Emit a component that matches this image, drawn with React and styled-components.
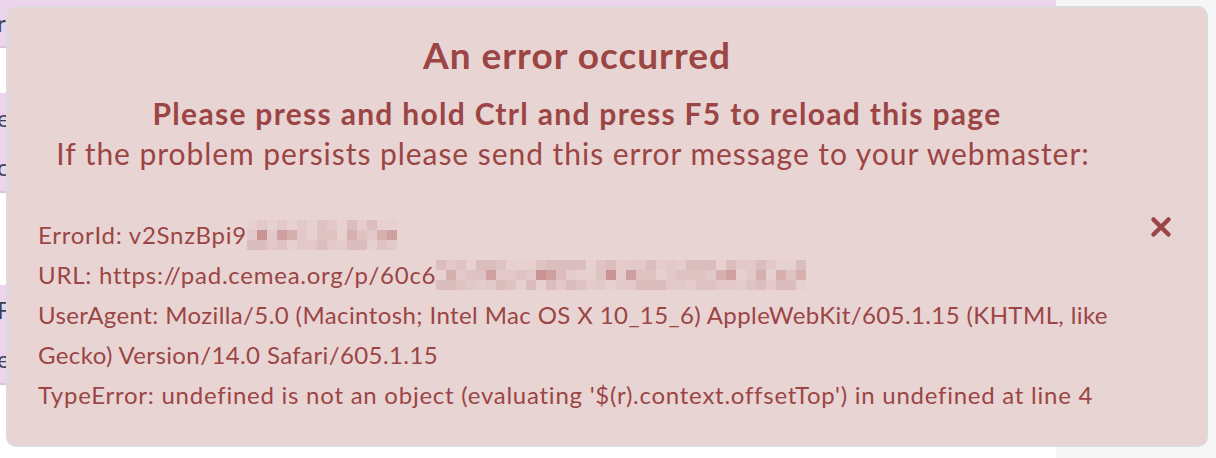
import React from 'react';
import styled, { createGlobalStyle } from 'styled-components';

const GlobalStyle = createGlobalStyle`
  html, body {
    margin: 0;
    padding: 0;
    background: #f6f6f7;
    font-family: Lato, "Noto Sans", sans-serif;
  }
`;

const Page = styled.div`
  width: 1056px;
  display: flex;
  flex-direction: column;
  background: #ffffff;
`;

const BackRow = styled.div`
  height: ${(p) => p.h}px;
  background: ${(p) => (p.lilac ? '#ecd4ec' : '#ffffff')};
  border-bottom: ${(p) => (p.lilac ? '2px solid #dcc4dc' : 'none')};
  color: #3b4350;
  font-size: 24px;
  display: flex;
  flex-direction: column;
  justify-content: space-around;
  box-sizing: border-box;
  overflow: hidden;
`;

const BackText = styled.span`
  margin-left: -3px;
  line-height: 1;
`;

const Overlay = styled.div`
  position: fixed;
  left: 6px;
  top: 6px;
  width: 1202px;
  height: 441px;
  box-sizing: border-box;
  background: #e9d4d4;
  border: 2px solid #dddadd;
  border-radius: 10px;
  color: #9b4545;
  display: flex;
  padding: 0 0 0 30px;
`;

const Main = styled.div`
  flex: 1;
  display: flex;
  flex-direction: column;
  padding-top: 25px;
`;

const Title = styled.h1`
  margin: 0;
  text-align: center;
  font-size: 37px;
  letter-spacing: 1px;
  font-weight: 700;
  line-height: 44px;
`;

const Hint = styled.p`
  margin: 16px 0 0;
  text-align: center;
  font-size: 30px;
  line-height: 40px;
  font-weight: ${(p) => (p.strong ? 700 : 400)};
  letter-spacing: ${(p) => (p.strong ? 1.3 : 0.95)}px;
  & + & {
    margin-top: 0;
    padding-right: 8px;
  }
`;

const Details = styled.div`
  margin-top: 42px;
  font-size: 24px;
  letter-spacing: 0.75px;
  line-height: 40px;
`;

const Line = styled.div`
  display: flex;
  align-items: center;
  min-height: 40px;
  letter-spacing: ${(p) => (p.tight ? '0.4px' : 'inherit')};
`;

const Mosaic = styled.span`
  display: inline-grid;
  grid-template-columns: repeat(${(p) => p.cols}, 10px);
  grid-auto-rows: 10px;
  flex: none;
`;

const Cell = styled.span`
  background: ${(p) => p.c};
`;

const CloseCol = styled.div`
  width: 90px;
  display: flex;
  justify-content: center;
  padding-top: 206px;
`;

const CloseButton = styled.button`
  width: 26px;
  height: 26px;
  padding: 0;
  border: none;
  background: none;
  cursor: pointer;
  display: flex;
  align-items: center;
  justify-content: center;
`;

const shades = ['#e7d0d0', '#e2c8c8', '#dcbdbd', '#d6afaf', '#cfa0a0', '#c99393', '#e5cccc', '#dfc3c3'];

function mosaicColors(cols, rows, seed) {
  const out = [];
  let s = seed;
  for (let i = 0; i < cols * rows; i++) {
    s = (s * 9301 + 49297) % 233280;
    const row = Math.floor(i / cols);
    let idx = Math.floor((s / 233280) * shades.length);
    // outer rows are paler, as in a pixelated line of text
    if (row !== 1 && idx >= 3 && idx <= 5) idx = idx - 3;
    out.push(shades[idx]);
  }
  return out;
}

const Blur = ({ cols, rows, seed }) => (
  <Mosaic cols={cols}>
    {mosaicColors(cols, rows, seed).map((c, i) => (
      <Cell key={i} c={c} />
    ))}
  </Mosaic>
);

const CloseIcon = () => (
  <svg width="24" height="24" viewBox="0 0 24 24">
    <path d="M4.5 4.5 L19.5 19.5 M19.5 4.5 L4.5 19.5" stroke="#9b4545" strokeWidth="4.5" strokeLinecap="round" />
  </svg>
);

const App = () => (
  <>
    <GlobalStyle />
    <Page>
      <BackRow h={48} lilac><BackText>r</BackText></BackRow>
      <BackRow h={45} />
      <BackRow h={100} lilac><BackText>e</BackText><BackText>c</BackText></BackRow>
      <BackRow h={92} />
      <BackRow h={100} lilac><BackText>F:</BackText><BackText>e</BackText></BackRow>
      <BackRow h={73} />
    </Page>
    <Overlay>
      <Main>
        <Title>An error occurred</Title>
        <Hint strong>Please press and hold Ctrl and press F5 to reload this page</Hint>
        <Hint>If the problem persists please send this error message to your webmaster:</Hint>
        <Details>
          <Line>ErrorId: v2SnzBpi9<Blur cols={15} rows={3} seed={7} /></Line>
          <Line>URL: https://pad.cemea.org/p/60c6<Blur cols={37} rows={3} seed={3} /></Line>
          <Line tight>UserAgent: Mozilla/5.0 (Macintosh; Intel Mac OS X 10_15_6) AppleWebKit/605.1.15 (KHTML, like Gecko) Version/14.0 Safari/605.1.15</Line>
          <Line>TypeError: undefined is not an object (evaluating '$(r).context.offsetTop') in undefined at line 4</Line>
        </Details>
      </Main>
      <CloseCol>
        <CloseButton aria-label="Close"><CloseIcon /></CloseButton>
      </CloseCol>
    </Overlay>
  </>
);

export default App;
